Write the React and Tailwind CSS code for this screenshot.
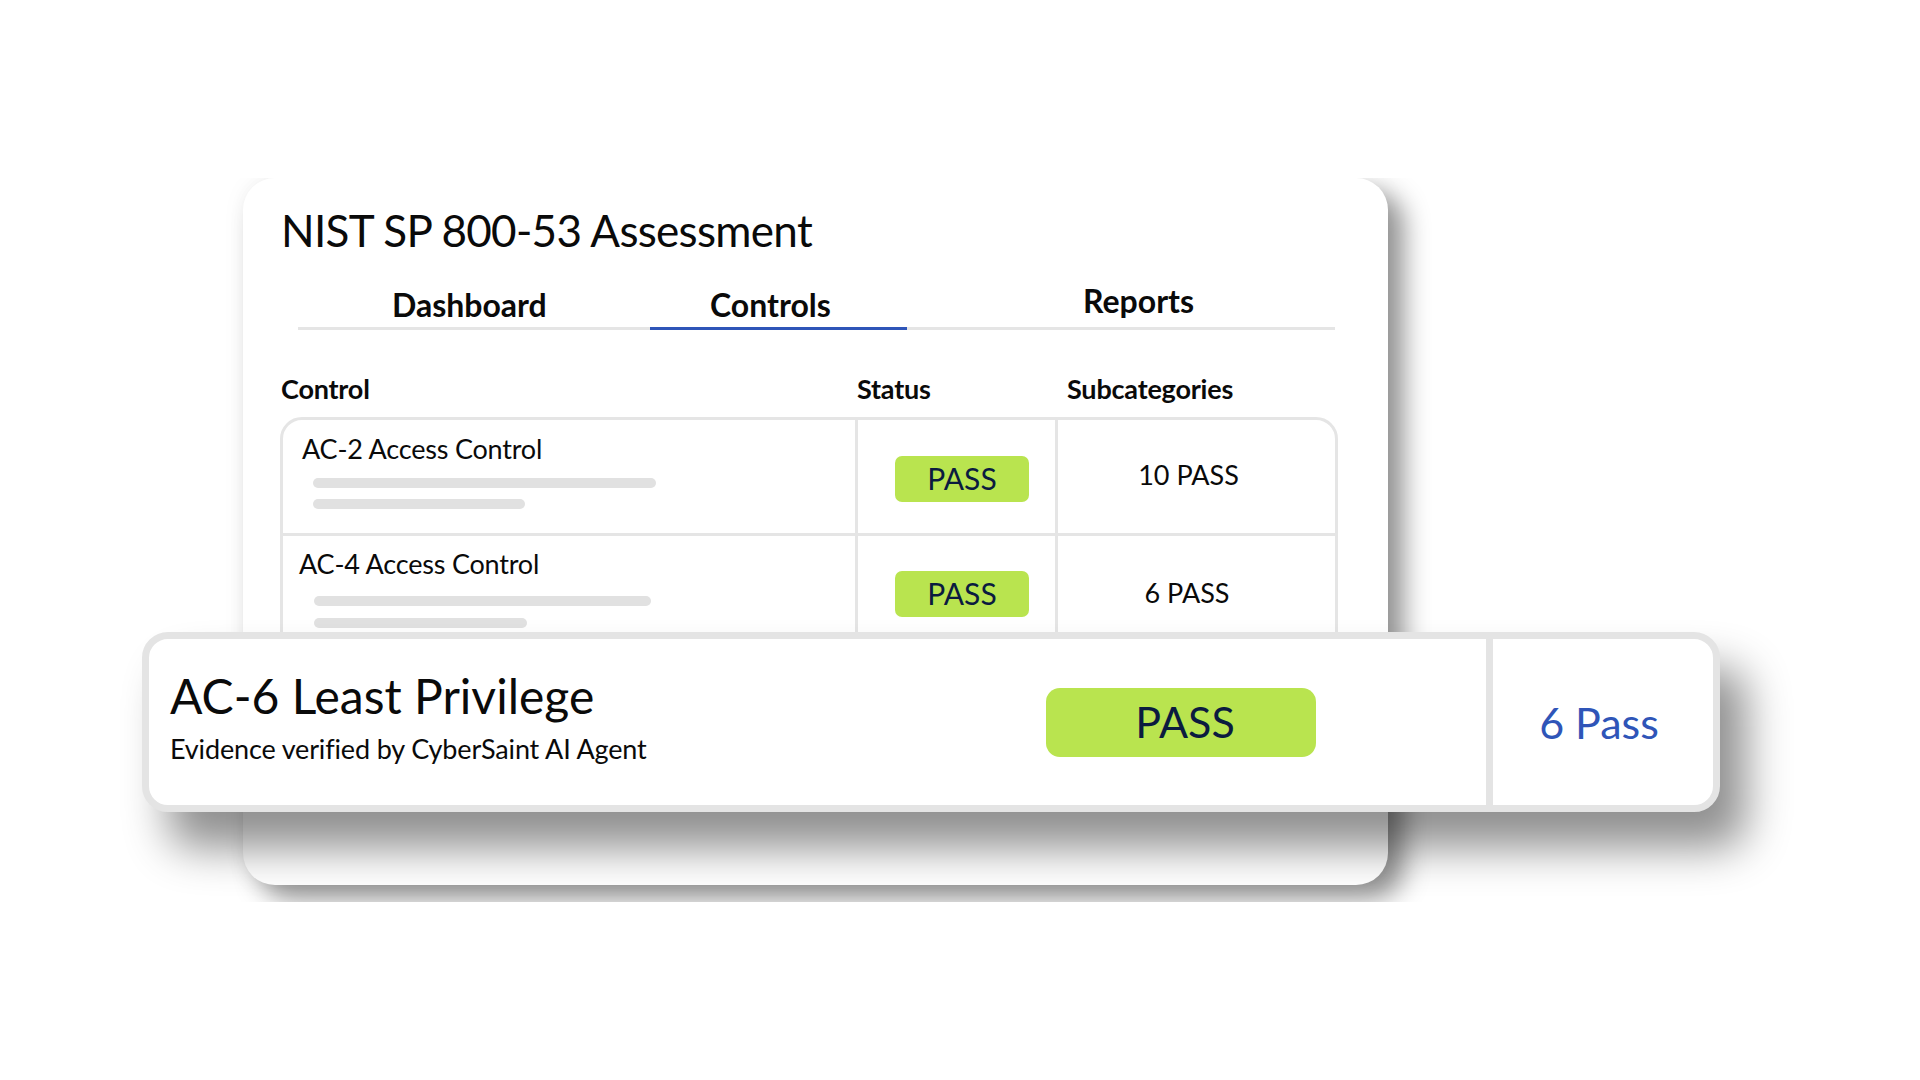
export default function App() {
  const Badge = () => (
    <div className="w-[134px] h-[46px] rounded-[7px] bg-[#b9e44f] text-[#0b1b3f] text-[30px] flex items-center justify-center pb-[2px]">PASS</div>
  );
  return (
    <div className="relative w-[1920px] h-[1080px] bg-white overflow-hidden font-['Lato','Liberation_Sans',sans-serif] text-[#0a0a0a]">
      <div className="mt-[178px] ml-[200px] w-[1280px] h-[724px] overflow-hidden pl-[43px]">
        <div className="w-[1145px] h-[707px] rounded-[32px] bg-white shadow-[16px_14px_26px_rgba(0,0,0,0.42),0_0_24px_rgba(0,0,0,0.05)] pl-[38px] overflow-hidden">
          <h1 className="pt-[24px] text-[44px] leading-[56px] font-normal tracking-[-0.7px]">NIST SP 800-53 Assessment</h1>
          <div className="ml-[17px] mt-[20px] w-[1037px] h-[52px] flex items-end border-b-[3px] border-[#e5e5e5] text-[32px] font-bold">
            <div className="w-[352px] h-full pl-[94px] leading-[53px]">Dashboard</div>
            <div className="w-[257px] h-[52px] -mb-[3px] border-b-[3px] border-[#2f55b8] pl-[60px] leading-[53px]">Controls</div>
            <div className="pl-[176px] h-full leading-[46px]">Reports</div>
          </div>
          <div className="mt-[43px] flex text-[27px] leading-[32px] font-bold tracking-[-0.2px]">
            <div className="w-[576px]">Control</div>
            <div className="w-[210px]">Status</div>
            <div>Subcategories</div>
          </div>
          <div className="mt-[12px] -ml-[1px] w-[1058px] h-[320px] rounded-t-[22px] border-[3px] border-[#e5e5e5] grid grid-cols-[575px_200px_1fr] grid-rows-[116px_1fr] text-[27px]">
            <div className="border-r-[3px] border-b-[3px] border-[#e5e5e5] pl-[19px] pt-[12px]">
              <div className="leading-[34px] tracking-[-0.2px]">AC-2 Access Control</div>
              <div className="ml-[11px] mt-[12px] w-[343px] h-[10px] rounded-full bg-[#e1e1e1]"></div>
              <div className="ml-[11px] mt-[11px] w-[212px] h-[10px] rounded-full bg-[#e1e1e1]"></div>
            </div>
            <div className="border-r-[3px] border-b-[3px] border-[#e5e5e5] pl-[37px] pt-[36px]"><Badge /></div>
            <div className="border-b-[3px] border-[#e5e5e5] pt-[37px] text-center pr-[16px] leading-[36px]">10 PASS</div>
            <div className="border-r-[3px] border-[#e5e5e5] pl-[16px] pt-[11px]">
              <div className="leading-[34px] tracking-[-0.2px]">AC-4 Access Control</div>
              <div className="ml-[15px] mt-[15px] w-[337px] h-[10px] rounded-full bg-[#e1e1e1]"></div>
              <div className="ml-[15px] mt-[12px] w-[213px] h-[10px] rounded-full bg-[#e1e1e1]"></div>
            </div>
            <div className="border-r-[3px] border-[#e5e5e5] pl-[37px] pt-[35px]"><Badge /></div>
            <div className="pt-[39px] text-center pr-[19px] leading-[36px]">6 PASS</div>
          </div>
        </div>
      </div>
      <div className="absolute left-[142px] top-[632px] w-[1578px] h-[180px] rounded-[26px] border-[7px] border-[#e4e4e4] bg-white shadow-[26px_36px_44px_rgba(0,0,0,0.44)] flex">
        <div className="w-[1337px] flex items-center">
          <div className="w-[897px] pl-[21px] pb-[10px]">
            <div className="text-[48px] leading-[60px]">AC-6 Least Privilege</div>
            <div className="text-[27px] leading-[38px] mt-[4px] tracking-[-0.15px]">Evidence verified by CyberSaint AI Agent</div>
          </div>
          <div className="w-[270px] h-[69px] rounded-[14px] bg-[#b9e44f] text-[#0b1b3f] text-[43px] flex items-center justify-center pl-[8px] mt-[1px]">PASS</div>
        </div>
        <div className="flex-1 border-l-[7px] border-[#e4e4e4] flex items-center justify-center text-[43px] text-[#2f55b8] pr-[8px] pt-[2px]">6 Pass</div>
      </div>
    </div>
  );
}
